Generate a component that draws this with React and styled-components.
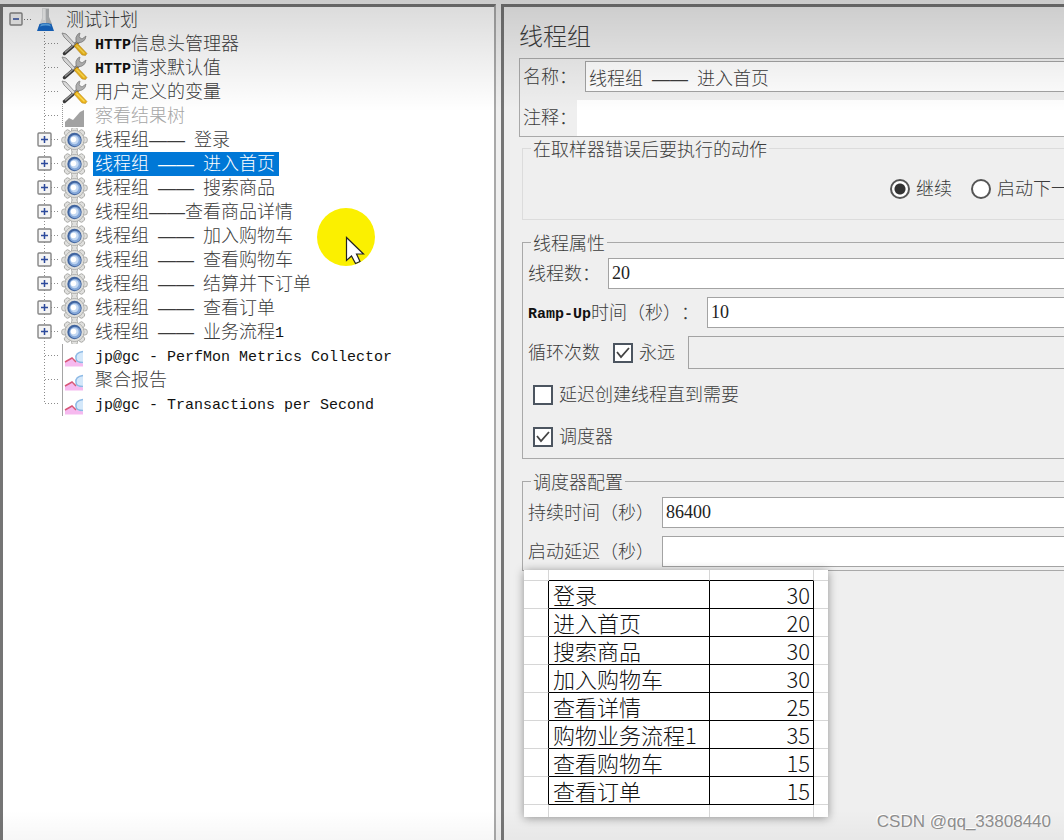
import React from 'react'
import styled, { createGlobalStyle, css } from 'styled-components'

const cjk = '"Liberation Sans", "Noto Sans CJK SC", sans-serif'
const mono = '"Liberation Mono", "Noto Sans CJK SC", monospace'

const GlobalStyle = createGlobalStyle`
  * { box-sizing: border-box; }
  body {
    margin: 0;
    background: #efefef;
    color: #3c3c3c;
    font-family: ${cjk};
    font-size: 18px;
    font-weight: 300;
    line-height: 24px;
    text-spacing-trim: space-all;
  }
`

const Window = styled.div`
  position: relative;
  display: grid;
  grid-template-columns: minmax(0, 496fr) minmax(0, 568fr);
  min-height: 100vh;
  padding-top: 4px;
  overflow: hidden;
  background: #efefef;
`
const Shade = styled.div`
  position: absolute;
  inset: 0;
  background:
    linear-gradient(rgba(0, 0, 0, 0.15), rgba(0, 0, 0, 0.07) 50%, transparent) top / 100% 112px no-repeat,
    linear-gradient(transparent, rgba(0, 0, 0, 0.03)) bottom / 100% 30px no-repeat;
  pointer-events: none;
`
const TreePane = styled.nav`
  padding-top: 1px;
  border: solid #757575;
  border-width: 3px 2px 0 3px;
  border-right-color: #a9a9a9;
  background: #fff;
`
const Tree = styled.ul`
  margin: 0;
  padding: 0;
  list-style: none;
`
const Row = styled.div`
  display: flex;
  align-items: center;
  height: 24px;
  padding-left: ${props => props.$root ? '6px' : '34px'};
  white-space: pre;

  svg { display: block; flex: none; }
`
const Expander = styled.button`
  flex: none;
  padding: 0;
  border: 0;
  background: none;
`
const Label = styled.span`
  margin-left: ${props => props.$root ? '9px' : '5px'};
  padding: 0 4px 0 2px;
  color: ${props => props.$disabled ? '#a6a6a6' : '#3c3c3c'};
  ${props => props.$selected && css`
    background: #0078d7;
    color: #fff;
  `}
`
const Latin = styled.span`
  color: ${props => props.$inherit ? 'inherit' : '#111'};
  font-family: ${mono};
  font-size: 15px;
  font-weight: ${props => props.$strong ? 700 : 400};
  line-height: 18px;
  vertical-align: 1px;
`
const Editor = styled.main`
  margin-left: 5px;
  margin-right: -6px;
  padding-left: 15px;
  border: solid #757575;
  border-width: 3px 0 0 3px;
`
const Title = styled.h1`
  margin: 0;
  padding: 18px 0 9px 0;
  font-size: 24px;
  font-weight: 300;
  line-height: 24px;
`
const Naming = styled.div`
  padding: 2px 0 0 3px;
  border: 1px solid #a9a9a9;
`
const Field = styled.div`
  display: flex;
  align-items: center;
  gap: ${props => props.$tight ? '0' : '8px'};
  margin-bottom: ${props => props.$last ? '0' : '8px'};
  white-space: pre;
`
const TextBox = styled.input`
  flex: 1;
  min-width: 0;
  height: 31px;
  padding: 0 3px;
  border: 1px solid #a3a3a3;
  border-radius: 0;
  outline: 0;
  background: #fff;
  color: #222;
  font-family: "Liberation Serif", serif;
  font-size: 18px;

  &:disabled {
    height: 33px;
    background: #efefef;
  }
`
const NameBox = styled(TextBox)`
  color: #3c3c3c;
  font-family: ${cjk};
  font-weight: 300;
`
const CommentBox = styled(NameBox)`
  height: 36px;
  border: 0;
`
const Group = styled.fieldset`
  min-width: 0;
  margin: 0 0 11px 3px;
  padding: ${props => props.$plain ? '0' : '5px 0 3px 5px'};
  border: 1px solid ${props => props.$plain ? '#dcdcdc' : '#a9a9a9'};
`
const Legend = styled.legend`
  margin-left: ${props => props.$plain ? '8px' : '3px'};
  padding: 4px 2px 0;
  line-height: 18px;
`
const Choices = styled.div`
  display: flex;
  align-items: center;
  justify-content: flex-end;
  gap: 19px;
  height: 60px;
`
const Choice = styled.label`
  display: flex;
  flex: none;
  align-items: center;
  gap: 6px;
  white-space: nowrap;
`
const Options = styled.div`
  display: grid;
  gap: 18px;
  padding: 14px 0 6px 5px;
`
const LoopChoice = styled(Choice)`
  margin: 0 5px;
`
const Tick = styled.input`
  appearance: none;
  width: 20px;
  height: 20px;
  margin: 0;
  border: 2px solid #4c5560;
  background: #fff;

  &:checked {
    background: #fff url("data:image/svg+xml,%3Csvg xmlns='http://www.w3.org/2000/svg' viewBox='0 0 16 16'%3E%3Cpath d='M2 7l4 5 8-9' fill='none' stroke='%23444' stroke-width='1.8'/%3E%3C/svg%3E") center / 16px no-repeat;
  }
`
const Radio = styled.input`
  appearance: none;
  width: 20px;
  height: 20px;
  margin: 0;
  border: 2px solid #555;
  border-radius: 50%;
  background: #fff;

  &:checked { background: radial-gradient(circle, #333 5px, #fff 6px); }
`
const Sheet = styled.div`
  position: relative;
  width: 304px;
  margin: -12px 0 23px 5px;
  background: #fff;
  box-shadow: 0 1px 9px rgba(0, 0, 0, 0.4);
`
const Grid = styled.table`
  width: 100%;
  table-layout: fixed;
  border-spacing: 0;
  color: #111;
  font-family: "Noto Sans CJK SC", sans-serif;
  font-size: 22px;
  line-height: 27px;
`
const Cell = styled.td`
  height: 28px;
  padding: 0 3px 0 4px;
  border: solid #000;
  border-width: 0 1px 1px 0;
  text-align: ${props => props.$number ? 'right' : 'left'};
  white-space: nowrap;
`
const Edge = styled.td`
  height: ${props => props.$height || 28}px;
  padding: 0;
  border: solid #d6d6d6;
  border-width: 0 ${props => props.$end ? 0 : 1}px ${props => props.$bottom ? 0 : 1}px 0;
  ${props => props.$dark === 'right' && 'border-right-color: #000;'}
  ${props => props.$dark === 'bottom' && 'border-bottom-color: #000;'}
  line-height: 0;
`
const Spot = styled.div`
  position: absolute;
  top: 208px;
  left: 317px;
  width: 58px;
  height: 58px;
  border-radius: 50%;
  background: #fbf000;
`
const Pointer = styled.svg`
  position: absolute;
  top: 28px;
  left: 28px;
`
const Watermark = styled.div`
  position: absolute;
  right: 13px;
  bottom: 6px;
  color: #8d8d8d;
  font: 17px/24px "Liberation Sans", sans-serif;
  text-shadow: -1px -1px #fff;
`

const Mixed = ({ text, strong, inherit }) => text.split(/([\x20-\x7e]+)/).map((part, i) =>
  i % 2 ? <Latin key={i} $strong={strong} $inherit={inherit}>{part}</Latin> : part
)

const Branch = ({ box, last }) => (
  <svg width='24' height='24' viewBox='0 0 24 24'>
    <path d={last ? 'M7.5 0V12' : 'M7.5 0V24'} stroke='#8c8c8c' strokeDasharray='1 2' />
    <path d='M8 11.5H22' stroke='#8c8c8c' strokeDasharray='1 2' />
    {box && <PlusBox />}
  </svg>
)

const PlusBox = () => (
  <g>
    <rect x='1' y='5' width='13' height='13' rx='1' fill='#f5f5f5' stroke='#858585' strokeWidth='1.4' />
    <path d='M4 11.5h7M7.5 8v7' stroke='#2c4a9c' strokeWidth='1.5' />
  </g>
)

const RootBranch = () => (
  <svg width='28' height='24' viewBox='0 0 28 24'>
    <rect x='1' y='5' width='12' height='12' rx='1' fill='#f1f1f1' stroke='#858585' strokeWidth='1.4' />
    <path d='M4 11h6' stroke='#2c4a9c' strokeWidth='1.5' />
    <path d='M15 11.5H24' stroke='#777' strokeDasharray='1 2' />
  </svg>
)

const Flask = () => (
  <svg width='18' height='24' viewBox='0 0 18 24'>
    <path d='M5 0h7v9l4 11H1L5 10z' fill='#dfe1e2' />
    <path d='M9 1h3v8l3 7H9z' fill='#b9bcbe' />
    <path d='M2.500 16q6-2 12 0L17 23H0z' fill='#1768c6' />
    <path d='M4 16.500q5-2 9 0l1 2q-5-2-11 0z' fill='#5aa9ec' />
    <path d='M7 1v11' stroke='#f8f8f8' strokeWidth='1.5' />
  </svg>
)

const Tools = () => (
  <svg width='27' height='24' viewBox='0 0 27 24'>
    <path d='M3.500 21.500L18 9' stroke='#3a3a3a' strokeWidth='3.500' strokeLinecap='round' />
    <path d='M4 20.500L18 8' stroke='#9a9a9a' strokeWidth='1.500' />
    <path d='M15 9q-1-4 2-7l2-1-1 4 3 2 4-3q0 4-4 6l-4 1z' fill='#b5b5b5' stroke='#868686' strokeWidth='.8' />
    <path d='M1 1l4 1 9 10-2 2L3 5z' fill='#e2e2e2' stroke='#8e8e8e' strokeWidth='.9' />
    <path d='M13 14l3-3 10 10.500-1.500 2-3.500-.5z' fill='#edb51c' stroke='#b98211' strokeWidth='.5' />
    <path d='M15.500 13.500l8 8' stroke='#ffdc50' strokeWidth='1.5' />
  </svg>
)

const teeth = [0, 45, 90, 135, 180, 225, 270, 315]
const Gear = () => (
  <svg width='27' height='24' viewBox='0 0 27 24'>
    <g fill='#e0e0de' stroke='#a8a8a5' strokeWidth='.9'>
      {teeth.map(angle => (
        <rect key={angle} x='10.500' y='-.8' width='6' height='7' rx='2.5' transform={`rotate(${angle} 13.5 12)`} />
      ))}
      <circle cx='13.5' cy='12' r='9.500' />
    </g>
    <circle cx='13.5' cy='12' r='9' fill='#dededb' />
    <circle cx='13.5' cy='12' r='7.200' fill='#40649f' />
    <circle cx='14' cy='12.500' r='5.800' fill='#86a9da' />
    <circle cx='13.500' cy='12' r='4.200' fill='#c3d8f2' />
    <circle cx='12.500' cy='11.500' r='2.800' fill='#fff' />
  </svg>
)

const Results = () => (
  <svg width='27' height='24' viewBox='0 0 27 24'>
    <path d='M1.500 0V24' stroke='#999' strokeDasharray='1 1' />
    <path d='M4 23v-5l4-4 4 2 7-8 4-2v17z' fill='#a2a2a2' />
  </svg>
)

const Graph = () => (
  <svg width='27' height='24' viewBox='0 0 27 24'>
    <path d='M1.500 0V24' stroke='#a5a5a5' />
    <path d='M4 22.500v-5l6-3 4 3 8 2v3z' fill='#f6b9ef' />
    <path d='M15 16q-1-8 7-9v11q-4 2-7-2z' fill='#d4e8fa' />
    <path d='M22 7.500q-8 1-7 7 0 4 7 4' fill='none' stroke='#8db9e5' strokeWidth='1.5' />
    <path d='M4 18l7-4 4 4' fill='none' stroke='#d75677' strokeWidth='1.500' />
  </svg>
)

const icons = { tools: Tools, gear: Gear, results: Results, graph: Graph }

const nodes = [
  { icon: 'tools', text: 'HTTP信息头管理器', strong: true },
  { icon: 'tools', text: 'HTTP请求默认值', strong: true },
  { icon: 'tools', text: '用户定义的变量' },
  { icon: 'results', text: '察看结果树', disabled: true },
  { icon: 'gear', text: '线程组—— 登录' },
  { icon: 'gear', text: '线程组 —— 进入首页', selected: true },
  { icon: 'gear', text: '线程组 —— 搜索商品' },
  { icon: 'gear', text: '线程组——查看商品详情' },
  { icon: 'gear', text: '线程组 —— 加入购物车' },
  { icon: 'gear', text: '线程组 —— 查看购物车' },
  { icon: 'gear', text: '线程组 —— 结算并下订单' },
  { icon: 'gear', text: '线程组 —— 查看订单' },
  { icon: 'gear', text: '线程组 —— 业务流程1' },
  { icon: 'graph', text: 'jp@gc - PerfMon Metrics Collector' },
  { icon: 'graph', text: '聚合报告' },
  { icon: 'graph', text: 'jp@gc - Transactions per Second' }
]

const loads = [
  ['登录', 30],
  ['进入首页', 20],
  ['搜索商品', 30],
  ['加入购物车', 30],
  ['查看详情', 25],
  ['购物业务流程1', 35],
  ['查看购物车', 15],
  ['查看订单', 15]
]

const TreeNode = ({ node, last }) => {
  const Icon = icons[node.icon]
  const expandable = node.icon === 'gear'
  return (
    <li>
      <Row>
        {expandable
          ? <Expander type='button' aria-label={`展开 ${node.text}`}><Branch box /></Expander>
          : <Branch last={last} />}
        <Icon />
        <Label $selected={node.selected} $disabled={node.disabled}>
          <Mixed text={node.text} strong={node.strong} inherit={node.selected} />
        </Label>
      </Row>
    </li>
  )
}

const TestTree = () => (
  <TreePane>
    <Tree>
      <li>
        <Row $root>
          <Expander type='button' aria-label='折叠 测试计划'><RootBranch /></Expander>
          <Flask />
          <Label $root>测试计划</Label>
        </Row>
        <Tree>
          {nodes.map((node, i) => <TreeNode key={i} node={node} last={i === nodes.length - 1} />)}
        </Tree>
      </li>
    </Tree>
  </TreePane>
)

const LoadSheet = () => (
  <Sheet>
    <Grid>
      <colgroup>
        <col width='25' />
        <col width='161' />
        <col width='104' />
        <col width='14' />
      </colgroup>
      <tbody>
        <tr>
          <Edge $height={11} />
          <Edge $height={11} $dark='bottom' />
          <Edge $height={11} $dark='bottom' />
          <Edge $height={11} $end />
        </tr>
        {loads.map(([name, count]) => (
          <tr key={name}>
            <Edge $dark='right' />
            <Cell>{name}</Cell>
            <Cell $number>{count}</Cell>
            <Edge $end />
          </tr>
        ))}
        <tr>
          <Edge $height={12} $bottom />
          <Edge $height={12} $bottom />
          <Edge $height={12} $bottom />
          <Edge $height={12} $bottom $end />
        </tr>
      </tbody>
    </Grid>
  </Sheet>
)

const ThreadGroup = () => (
  <Editor>
    <Title>线程组</Title>
    <Naming>
      <Field>
        <label htmlFor='name'>名称：</label>
        <NameBox id='name' defaultValue={'线程组\u2002——\u2002进入首页'} />
      </Field>
      <Field $tight $last>
        <label htmlFor='comment'>注释：</label>
        <CommentBox id='comment' />
      </Field>
    </Naming>
    <Group $plain>
      <Legend $plain>在取样器错误后要执行的动作</Legend>
      <Choices>
        <Choice><Radio type='radio' name='onError' defaultChecked />继续</Choice>
        <Choice><Radio type='radio' name='onError' />启动下一</Choice>
      </Choices>
    </Group>
    <Group>
      <Legend>线程属性</Legend>
      <Field>
        <label htmlFor='threads'>线程数：</label>
        <TextBox id='threads' defaultValue='20' />
      </Field>
      <Field>
        <label htmlFor='rampUp'><Mixed text='Ramp-Up时间（秒）：' strong /></label>
        <TextBox id='rampUp' defaultValue='10' />
      </Field>
      <Field $last>
        <label htmlFor='loops'>循环次数</label>
        <LoopChoice><Tick type='checkbox' defaultChecked />永远</LoopChoice>
        <TextBox id='loops' disabled />
      </Field>
      <Options>
        <Choice><Tick type='checkbox' />延迟创建线程直到需要</Choice>
        <Choice><Tick type='checkbox' defaultChecked />调度器</Choice>
      </Options>
    </Group>
    <Group>
      <Legend>调度器配置</Legend>
      <Field>
        <label htmlFor='duration'>持续时间（秒）</label>
        <TextBox id='duration' defaultValue='86400' />
      </Field>
      <Field $last>
        <label htmlFor='delay'>启动延迟（秒）</label>
        <TextBox id='delay' />
      </Field>
    </Group>
    <LoadSheet />
  </Editor>
)

const App = () => (
  <Window>
    <GlobalStyle />
    <TestTree />
    <ThreadGroup />
    <Shade />
    <Spot>
      <Pointer width='22' height='30' viewBox='0 0 22 30'>
        <path d='M1.500 1.500v23l5-4.500 4 7.500 4.500-2-3.500-7.500h7z' fill='#fff' stroke='#222' strokeWidth='1.2' />
      </Pointer>
    </Spot>
    <Watermark>CSDN @qq_33808440</Watermark>
  </Window>
)

export default App
